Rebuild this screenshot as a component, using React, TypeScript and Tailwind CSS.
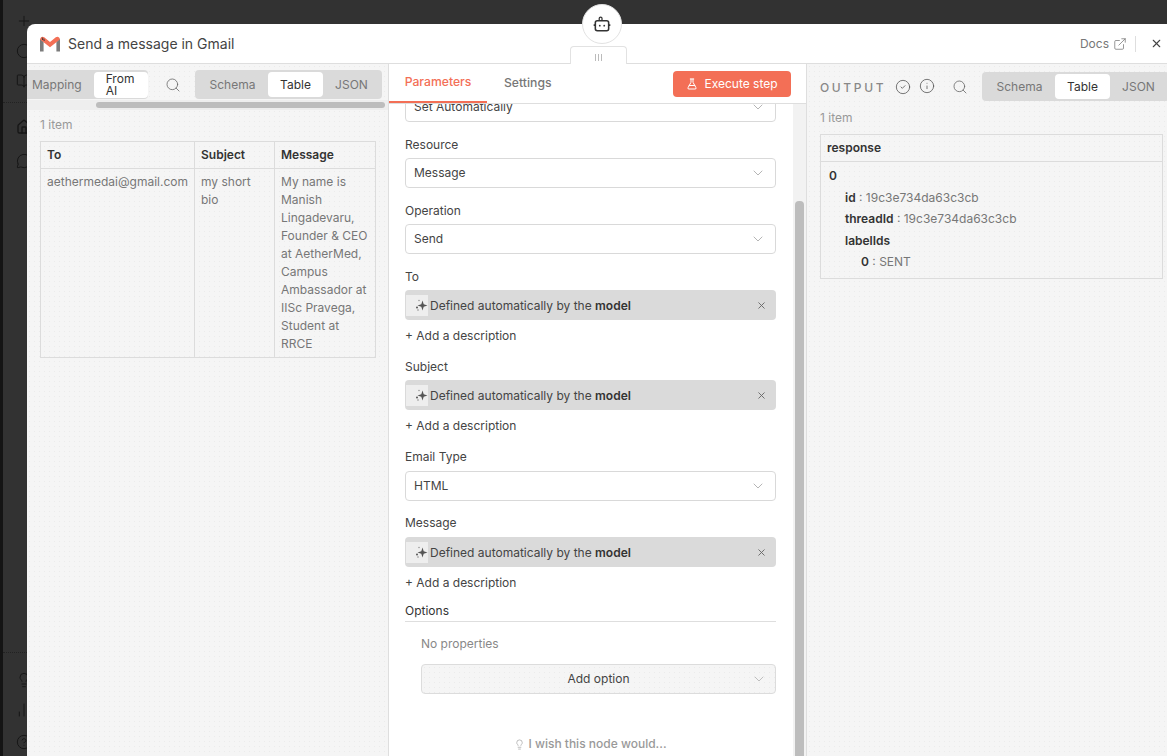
import React from "react";
import { ChevronDown, X, Search, FlaskConical, ExternalLink, CircleCheck, Info, Lightbulb, Plus, Circle, BookOpen, Home, MessageCircle, BarChart2, HelpCircle } from "lucide-react";

const dots = "bg-[#f5f5f5] bg-[radial-gradient(#ebebeb_0.6px,transparent_0.7px)] bg-[length:5px_5px]";

function Sparkle() {
  return (
    <span className="flex h-[21px] w-[22px] shrink-0 items-center justify-end bg-[#eeeeee]">
      <svg width="14" height="14" viewBox="0 0 14 14" fill="#555">
        <path d="M8.5 2.5 L9.7 6.3 L13.5 7.5 L9.7 8.7 L8.5 12.5 L7.3 8.7 L3.5 7.5 L7.3 6.3 Z" />
        <circle cx="3" cy="9.5" r="1" />
        <circle cx="5" cy="2.5" r="0.8" fill="#999" />
        <circle cx="4" cy="12" r="0.7" fill="#777" />
      </svg>
    </span>
  );
}

function ChipField({ label, className }: { label: string; className: string }) {
  return (
    <div className={className}>
      <div className="mb-[4px] h-[18px] text-[12px] leading-[18px] text-[#444]">{label}</div>
      <div className="flex h-[30px] items-center rounded bg-[#dadada] pl-[1px] pr-[9px] text-[12px] text-[#444]">
        <Sparkle />
        <span className="ml-[2px] mt-[1px]">Defined automatically by the <b className="font-semibold text-[#333]">model</b></span>
        <X size={11} className="ml-auto text-[#666]" />
      </div>
      <div className="mt-[7px] h-[18px] text-[12px] leading-[18px] text-[#444]">+ Add a description</div>
    </div>
  );
}

function SelectField({ label, value, className, labelClass }: { label: string; value: string; className: string; labelClass: string }) {
  return (
    <div className={className}>
      <div className={"h-[18px] text-[12px] leading-[18px] text-[#444] " + labelClass}>{label}</div>
      <SelectBox value={value} />
    </div>
  );
}

function SelectBox({ value }: { value: string }) {
  return (
    <div className="flex h-[30px] items-center justify-between rounded border border-[#d9d9d9] bg-white pl-2 pr-[9px] text-[12px] text-[#444]">
      <span>{value}</span>
      <ChevronDown size={16} strokeWidth={1.1} className="text-[#999]" />
    </div>
  );
}

function DisplayTabs() {
  return (
    <div className="flex h-[29px] w-[187px] shrink-0 items-center rounded bg-[#dadada] px-[2px] text-[12px] text-[#777]">
      <span className="w-[71px] text-center">Schema</span>
      <span className="flex h-[25px] w-[55px] items-center justify-center rounded bg-white text-[#333]">Table</span>
      <span className="w-[57px] text-center">JSON</span>
    </div>
  );
}

function Th({ children, className = "" }: { children: React.ReactNode; className?: string }) {
  return <th className={"h-[27px] border border-[#dcdcdc] px-[6px] py-0 text-left text-[12px] font-semibold text-[#333] " + className}>{children}</th>;
}

function Td({ children }: { children: React.ReactNode }) {
  return <td className="border border-[#dcdcdc] px-[6px] pb-[4px] pt-[4px] align-top text-[12px] leading-[18px] text-[#777]">{children}</td>;
}

export default function App() {
  return (
    <div className="relative h-[756px] w-[1167px] overflow-hidden bg-[#323232] font-['Inter',sans-serif]">
      {/* Dimmed canvas behind the dialog */}
      <div className="absolute left-0 top-0 h-full w-[3px] bg-[#141414]" />
      <div className="absolute left-[3px] top-[102px] w-[24px] border-t border-dotted border-[#222]" />
      <div className="absolute left-[3px] top-[652px] w-[24px] border-t border-dotted border-[#222]" />
      <div className="absolute left-[16px] top-0 h-full w-[18px] text-[#161616]">
        <Plus size={16} className="absolute top-[13px]" strokeWidth={1.5} />
        <Circle size={16} className="absolute top-[43px]" strokeWidth={1.5} />
        <BookOpen size={16} className="absolute top-[73px]" strokeWidth={1.5} />
        <Home size={16} className="absolute top-[119px]" strokeWidth={2} />
        <MessageCircle size={16} className="absolute top-[153px]" strokeWidth={1.5} />
        <Lightbulb size={16} className="absolute top-[672px]" strokeWidth={1.5} />
        <BarChart2 size={16} className="absolute top-[702px]" strokeWidth={1.5} />
        <HelpCircle size={16} className="absolute top-[734px]" strokeWidth={1.5} />
      </div>

      {/* Dialog */}
      <div className="ml-[27px] flex h-[732px] translate-y-[24px] flex-col overflow-hidden rounded-tl-lg bg-white">
        <header className="flex h-[40px] shrink-0 items-center border-b border-[#dedede] pl-[12px] pr-[2px]">
          <svg width="22" height="18" viewBox="0 0 22 18" className="shrink-0">
            <path d="M1 3.5 V16.5 H4.6 V7 Z M21 3.5 V16.5 H17.4 V7 Z" fill="#7c7c7c" />
            <path d="M1.2 4.5 C1.2 2 3.6 1 5.2 2.3 L11 7 L16.8 2.3 C18.4 1 20.8 2 20.8 4.5 L11 12.2 Z" fill="#f36f56" />
            <path d="M3.2 2.5 L3.6 5 M4.8 3.6 L5.2 6" stroke="#333" strokeWidth="0.9" />
          </svg>
          <span className="ml-[7px] text-[14px] text-[#444]">Send a message in Gmail</span>
          <div className="ml-auto flex items-center text-[12px] text-[#777]">
            <span>Docs</span>
            <ExternalLink size={14} strokeWidth={1.3} className="ml-[4px]" />
            <span className="ml-[8px] h-[16px] border-l border-[#dedede]" />
            <X size={13} strokeWidth={2} className="ml-[14px] mr-[2px] text-[#444]" />
          </div>
        </header>

        <div className="flex min-h-0 flex-1">
          {/* Input panel */}
          <section className={"w-[362px] shrink-0 overflow-hidden border-r border-[#dedede] " + dots}>
            <div className="flex h-[33px] items-start pt-[6px]">
              <div className="flex h-[29px] w-[121px] shrink-0 items-center rounded-r bg-[#dadada] pl-[5px] text-[12px] text-[#777]">
                <span>Mapping</span>
                <span className="ml-[12px] flex h-[26px] w-[54px] items-center rounded bg-white pl-[12px] text-[12px] leading-[12px] text-[#333]">From AI</span>
              </div>
              <Search size={16} strokeWidth={1.2} className="ml-[17px] mr-[14px] mt-[7px] shrink-0 text-[#666]" />
              <DisplayTabs />
            </div>
            <div className="mt-[3px] h-[10px] bg-[#eeeeee] pl-[69px] pt-[2px]">
              <div className="h-[6px] w-[289px] rounded-full bg-[#bdbdbd]" />
            </div>
            <div className="pl-[13px] pr-[12px]">
              <div className="mt-[6px] h-[18px] text-[12px] leading-[18px] text-[#999]">1 item</div>
              <table className="mt-[7px] w-[336px] table-fixed border-collapse">
                <thead>
                  <tr>
                    <Th className="w-[154px]">To</Th>
                    <Th className="w-[80px]">Subject</Th>
                    <Th>Message</Th>
                  </tr>
                </thead>
                <tbody>
                  <tr>
                    <Td>aethermedai@gmail.com</Td>
                    <Td>my short bio</Td>
                    <Td>My name is Manish Lingadevaru, Founder &amp; CEO at AetherMed, Campus Ambassador at IISc Pravega, Student at RRCE</Td>
                  </tr>
                </tbody>
              </table>
            </div>
          </section>

          {/* Parameters panel */}
          <section className="flex w-[418px] shrink-0 flex-col border-r border-[#dedede]">
            <div className="flex h-[40px] shrink-0 items-start border-b border-[#dedede]">
              <div className="flex h-[39px] w-[98px] items-center justify-center border-b-2 border-[#f36f56] text-[12.2px] font-medium text-[#f36f56]">Parameters</div>
              <div className="ml-[17px] flex h-[39px] items-center text-[12.2px] font-medium text-[#777]">Settings</div>
              <button className="ml-auto mr-[15px] mt-[7px] flex h-[26px] w-[118px] items-center justify-center rounded bg-[#f36f56] text-[12px] text-white">
                <FlaskConical size={12} className="mr-[6px]" />
                Execute step
              </button>
            </div>
            <div className="flex min-h-0 flex-1">
              <div className="min-w-0 flex-1 overflow-hidden pl-[16px] pr-[17px]">
                <div className="-mt-[12px]">
                  <SelectBox value="Set Automatically" />
                  <SelectField className="mt-[14px]" labelClass="mb-[4px]" label="Resource" value="Message" />
                  <SelectField className="mt-[14px]" labelClass="mb-[4px]" label="Operation" value="Send" />
                  <ChipField className="mt-[14px]" label="To" />
                  <ChipField className="mt-[13px]" label="Subject" />
                  <SelectField className="mt-[13px]" labelClass="mb-[5px]" label="Email Type" value="HTML" />
                  <ChipField className="mt-[13px] [&>div:first-child]:mb-[5px]" label="Message" />
                  <div className="mt-[10px] h-[20px] border-b border-[#dedede] text-[12px] leading-[18px] text-[#333]">Options</div>
                  <div className="pl-[16px]">
                    <div className="mt-[13px] h-[18px] text-[12px] leading-[18px] text-[#888]">No properties</div>
                    <div className={"relative mt-[11px] flex h-[30px] items-center justify-center rounded border border-[#dcdcdc] text-[12px] text-[#444] " + dots}>
                      Add option
                      <ChevronDown size={16} strokeWidth={1.1} className="absolute right-[8px] text-[#aaa]" />
                    </div>
                  </div>
                  <div className="mt-[41px] flex items-center justify-center gap-[3px] text-[12px] font-medium text-[#999]">
                    <Lightbulb size={11} strokeWidth={1.4} />
                    I wish this node would...
                  </div>
                </div>
              </div>
              <div className="w-[13px] shrink-0 bg-[#f2f2f2] pl-[2px] pt-[97px]">
                <div className="h-[600px] w-[9px] rounded-t bg-[#bdbdbd]" />
              </div>
            </div>
          </section>

          {/* Output panel */}
          <section className={"min-w-0 flex-1 overflow-hidden pl-[13px] " + dots}>
            <div className="flex h-[33px] items-start pt-[8px]">
              <span className="mt-[7px] w-[67px] shrink-0 text-[12px] font-medium tracking-[0.22em] text-[#888]">OUTPUT</span>
              <CircleCheck size={16} strokeWidth={1.2} className="ml-[8px] mt-[7px] shrink-0 text-[#555]" />
              <Info size={16} strokeWidth={1.2} className="ml-[8px] mt-[6px] shrink-0 text-[#555]" />
              <Search size={16} strokeWidth={1.2} className="ml-[17px] mt-[7px] shrink-0 text-[#666]" />
              <span className="ml-[14px] shrink-0"><DisplayTabs /></span>
            </div>
            <div className="mt-[12px] h-[18px] text-[12px] leading-[18px] text-[#999]">1 item</div>
            <div className="mr-[4px] mt-[7px] border border-[#dcdcdc]">
              <div className="flex h-[27px] items-center border-b border-[#dcdcdc] pl-[6px] text-[12px] font-semibold text-[#333]">response</div>
              <div className="pb-[5px] pl-[8px] pt-[3px] text-[12px] leading-[21.5px] text-[#777]">
                <div className="font-semibold text-[#333]">0</div>
                <div className="pl-[16px]"><b className="font-semibold text-[#333]">id</b> : 19c3e734da63c3cb</div>
                <div className="pl-[16px]"><b className="font-semibold text-[#333]">threadId</b> : 19c3e734da63c3cb</div>
                <div className="pl-[16px] font-semibold text-[#333]">labelIds</div>
                <div className="pl-[32px]"><b className="font-semibold text-[#333]">0</b> : SENT</div>
              </div>
            </div>
          </section>
        </div>
      </div>

      {/* Floating node badge and panel handle */}
      <div className="absolute left-[582px] top-[4px] flex h-[40px] w-[40px] items-center justify-center rounded-full border border-[#e2e2e2] bg-white">
        <svg width="20" height="20" viewBox="0 0 18 18" fill="none" stroke="#333" strokeWidth="1.4">
          <rect x="3" y="6" width="12" height="9" rx="1.8" />
          <path d="M6.5 6 V3.8 C6.5 2.4 9 2.4 9 3.8 V6" strokeWidth="1.1" />
          <path d="M1.5 10 H3 M15 10 H16.5" />
          <circle cx="7" cy="10.5" r="0.8" fill="#333" stroke="none" />
          <circle cx="11" cy="10.5" r="0.8" fill="#333" stroke="none" />
        </svg>
      </div>
      <div className="absolute left-[570px] top-[46px] flex h-[18px] w-[57px] items-center justify-center rounded-t border border-b-0 border-[#e2e2e2] bg-white pt-[3px]">
        <span className="h-[7px] w-[1px] bg-[#bbb]" />
        <span className="mx-[2px] h-[7px] w-[1px] bg-[#bbb]" />
        <span className="h-[7px] w-[1px] bg-[#bbb]" />
      </div>
    </div>
  );
}
